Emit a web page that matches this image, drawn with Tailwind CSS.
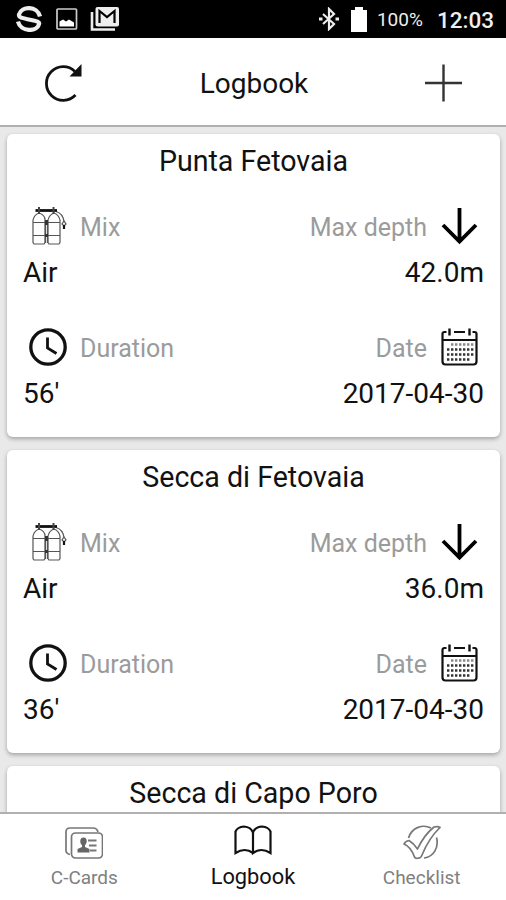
<!DOCTYPE html>
<html lang="en">
<head>
    <meta charset="UTF-8">
    <meta name="viewport" content="width=device-width, initial-scale=1.0">
    <title>Logbook</title>
    <script src="https://cdn.jsdelivr.net/npm/@tailwindcss/browser@4"></script>
</head>
<body class="bg-white font-['Roboto',sans-serif] text-[#111]">
    <!-- Shared icons -->
    <svg class="hidden">
        <symbol id="tanks" viewBox="0 0 38 38">
            <g fill="none" stroke="#555" stroke-width="1.200">
                <path d="M4 35.500V13q1-5 6-7q6 2 6 7v22.500l-1 1.500H5z"/>
                <path d="M19 35.500V13q1-5 6-7q5 2 6 7v22.500l-1 1.500h-10z"/>
                <path d="M4 15.500h27M4 28.500h27M16.500 14v22M18.500 14v22"/>
                <path d="M27 4.500q7 2 8 10"/>
                <path d="M35 14l-2 3l2 2l2-2z"/>
            </g>
            <path d="M6.500 3.500H28" stroke="#111" stroke-width="2.800"/>
            <path d="M10 0v7M24.500 0v7" stroke="#444" stroke-width="2"/>
            <path d="M17.500 13v5M17.500 27v3" stroke="#333" stroke-width="3"/>
            <path d="M35 18v4" stroke="#111" stroke-width="2.200"/>
        </symbol>
        <symbol id="depth" viewBox="0 0 38 38">
            <path d="M18.500 1v33M2 18l16.500 16.500L35 18" fill="none" stroke="#000" stroke-width="3.800"/>
        </symbol>
        <symbol id="clock" viewBox="0 0 38 38">
            <circle cx="19" cy="19" r="17.200" fill="none" stroke="#111" stroke-width="3.300"/>
            <path d="M18.500 9.500V20l9 5.500" fill="none" stroke="#111" stroke-width="2.800"/>
        </symbol>
        <symbol id="calendar" viewBox="0 0 38 38">
            <g fill="none" stroke="#111">
                <path d="M5.500 4H3.500Q1.500 4 1.500 6v27.500q0 3 3 3h28q3 0 3-3V6q0-2-2-2h-2M13 4h11M1.500 12h34" stroke-width="2.200"/>
                <path d="M8.500 .5v7M28.500 .5v7" stroke-width="2.400"/>
                <path d="M10 16.500h22.500" stroke="#888" stroke-width="2.400" stroke-dasharray="2.400 1.600"/>
                <path d="M6 21.500h26.500M6 26.500h26.500M6 31.500h22.500" stroke="#333" stroke-width="2.400" stroke-dasharray="2.400 1.600"/>
            </g>
        </symbol>
    </svg>

    <div class="flex h-[900px] w-[506px] flex-col overflow-hidden">
        <!-- Status bar -->
        <div class="flex h-[38px] shrink-0 items-center bg-black pr-3 pl-4 text-[#eee]">
            <svg class="size-[26px]" viewBox="0 0 26 26" fill="none" stroke="#eee" stroke-width="4.200">
                <path d="M24 10.500C21.500-.3 5.500-.3 3 8.500c-.5 3 3 3.500 10 5s11 2 10 4.500C21 26.300 4.500 26.300 2 15.500"/>
            </svg>
            <svg class="ml-[14px] size-[22px]" viewBox="0 0 22 22">
                <rect x="1" y="1" width="19.500" height="20" rx="1" fill="none" stroke="#ccc" stroke-width="1.700"/>
                <path d="M3.500 18.500v-5l3.500-2l3 2l3-2l5 3v4z" fill="#fff"/>
            </svg>
            <svg class="ml-3 h-[26px] w-[30px]" viewBox="0 0 30 26">
                <path d="M2 6v17.500h23" fill="none" stroke="#eee" stroke-width="2.600"/>
                <rect x="5.500" y="1" width="23.500" height="19.500" rx="2" fill="#eee"/>
                <path d="M9.500 17V5l7.500 6l7.500-6v12" fill="none" stroke="#000" stroke-width="2.200"/>
            </svg>
            <svg class="ml-auto h-[24px] w-[20px]" viewBox="0 0 20 24" fill="none" stroke="#eee" stroke-width="2.200">
                <path d="M4 7l11 10l-5 5V2l5 5L4 17"/>
                <path d="M0 12h3.500M16.500 12H20" stroke-width="2.800"/>
            </svg>
            <svg class="ml-3 h-[25px] w-[16px]" viewBox="0 0 16 25">
                <path d="M0 3h4V0h8v3h4v22H0z" fill="#fff"/>
            </svg>
            <span class="mt-[3px] ml-[10px] w-[46px] text-[19px] whitespace-nowrap">100%</span>
            <span class="mt-[3px] ml-[14px] text-[22.500px] font-medium">12:03</span>
        </div>

        <!-- Title bar -->
        <header class="flex h-[89px] shrink-0 items-center justify-between border-b-2 border-[#b0b0b0] pt-[2px] pr-[43px] pl-[45px]">
            <svg class="size-[38px]" viewBox="0 0 38 38">
                <path d="M30.500 31A16.800 16.800 0 1 1 30 7.500" fill="none" stroke="#111" stroke-width="2.800"/>
                <path d="M36.500 0v12.500H24.500z" fill="#111"/>
            </svg>
            <h1 class="mt-[2px] text-[28px]">Logbook</h1>
            <svg class="size-[38px]" viewBox="0 0 38 38">
                <path d="M18.500 .5v37M0 19h37" stroke="#333" stroke-width="2.400"/>
            </svg>
        </header>

        <!-- Dives -->
        <main class="flex min-h-0 flex-1 flex-col gap-[13px] overflow-hidden bg-[#e9e9e9] pt-[7px] pr-[6px] pl-[7px] text-[28px]">
            <article class="h-[303px] shrink-0 rounded-md bg-white px-4 shadow-[0_2px_4px_rgba(0,0,0,0.3)]">
                <h2 class="h-[53px] text-center text-[28.600px] leading-[54px]">Punta Fetovaia</h2>
                <div class="mt-[17px] flex h-11 items-center justify-between pr-[5px] pl-[6px] text-[25px] text-[#9b9b9b]">
                    <div class="flex items-center gap-[13px]"><svg class="size-[38px]"><use href="#tanks"/></svg><span class="mt-[3px]">Mix</span></div>
                    <div class="flex items-center gap-[14px]"><span class="mt-[3px]">Max depth</span><svg class="size-[38px]"><use href="#depth"/></svg></div>
                </div>
                <div class="flex h-[49px] items-center justify-between"><span>Air</span><span>42.0m</span></div>
                <div class="mt-[28px] flex h-11 items-center justify-between pr-[5px] pl-[6px] text-[25px] text-[#9b9b9b]">
                    <div class="flex items-center gap-[13px]"><svg class="size-[38px]"><use href="#clock"/></svg><span class="mt-[3px]">Duration</span></div>
                    <div class="flex items-center gap-[14px]"><span class="mt-[3px]">Date</span><svg class="size-[38px]"><use href="#calendar"/></svg></div>
                </div>
                <div class="flex h-[49px] items-center justify-between"><span>56'</span><span>2017-04-30</span></div>
            </article>

            <article class="h-[303px] shrink-0 rounded-md bg-white px-4 shadow-[0_2px_4px_rgba(0,0,0,0.3)]">
                <h2 class="h-[53px] text-center text-[28.600px] leading-[54px]">Secca di Fetovaia</h2>
                <div class="mt-[17px] flex h-11 items-center justify-between pr-[5px] pl-[6px] text-[25px] text-[#9b9b9b]">
                    <div class="flex items-center gap-[13px]"><svg class="size-[38px]"><use href="#tanks"/></svg><span class="mt-[3px]">Mix</span></div>
                    <div class="flex items-center gap-[14px]"><span class="mt-[3px]">Max depth</span><svg class="size-[38px]"><use href="#depth"/></svg></div>
                </div>
                <div class="flex h-[49px] items-center justify-between"><span>Air</span><span>36.0m</span></div>
                <div class="mt-[28px] flex h-11 items-center justify-between pr-[5px] pl-[6px] text-[25px] text-[#9b9b9b]">
                    <div class="flex items-center gap-[13px]"><svg class="size-[38px]"><use href="#clock"/></svg><span class="mt-[3px]">Duration</span></div>
                    <div class="flex items-center gap-[14px]"><span class="mt-[3px]">Date</span><svg class="size-[38px]"><use href="#calendar"/></svg></div>
                </div>
                <div class="flex h-[49px] items-center justify-between"><span>36'</span><span>2017-04-30</span></div>
            </article>

            <article class="h-[303px] shrink-0 rounded-md bg-white px-4 shadow-[0_2px_4px_rgba(0,0,0,0.3)]">
                <h2 class="h-[53px] text-center text-[28.600px] leading-[54px]">Secca di Capo Poro</h2>
            </article>
        </main>

        <!-- Tabs -->
        <nav class="grid h-[88px] shrink-0 grid-cols-3 border-t-2 border-[#b0b0b0] bg-white text-[19px] leading-[28px] text-[#808080]">
            <a class="flex flex-col items-center pt-[11px]">
                <svg class="size-[38px]" viewBox="0 0 38 38" fill="none" stroke="#777" stroke-width="1.700">
                    <path d="M5 29.500q-4-1-4-4V7q0-4 4-4h23q4 0 5 4"/>
                    <rect x="6.500" y="8" width="31" height="25" rx="4"/>
                    <path d="M23 15.500h8.500M24 20.500h7.500M25 25.500h6.500" stroke-width="2.200"/>
                    <path d="M18.500 12.500c-4.500 0-3.500 6.500-1.500 7.500v2l-4.500 2v3.500h12V24l-4.500-2v-2c2-1 3-7.500-1.500-7.500z" fill="#666" stroke="none"/>
                </svg>
                <span class="mt-[1px]">C-Cards</span>
            </a>
            <a class="flex flex-col items-center pt-[8px] text-[#111]">
                <svg class="size-[38px]" viewBox="0 0 38 38" fill="none" stroke="#111" stroke-width="2.200">
                    <path d="M19 31q-8-6-17.500 0V9.500q2-4.500 8.500-5q7 .5 9 6q2-5.500 9-6q6.500 .5 8.500 5V31q-9.500-6-17.500 0V10"/>
                </svg>
                <span class="mt-[3px] text-[21.800px]">Logbook</span>
            </a>
            <a class="flex flex-col items-center pt-[11px]">
                <svg class="size-[38px]" viewBox="0 0 38 38" fill="none" stroke="#777" stroke-width="1.700" stroke-linejoin="round">
                    <path d="M1 19q1.500-3 5-3.500q5 3 8.500 8.500Q21 10 31 2q4-1 6 .5Q26 13 19 30q-1.500 3.500-3.500 3q-3 1-4-1Q8 22 1 19z"/>
                    <path d="M5.500 13C9 2 20-1 28 3M33.500 12.500C36 22 31 32 21 33"/>
                </svg>
                <span class="mt-[1px]">Checklist</span>
            </a>
        </nav>
    </div>
</body>
</html>
